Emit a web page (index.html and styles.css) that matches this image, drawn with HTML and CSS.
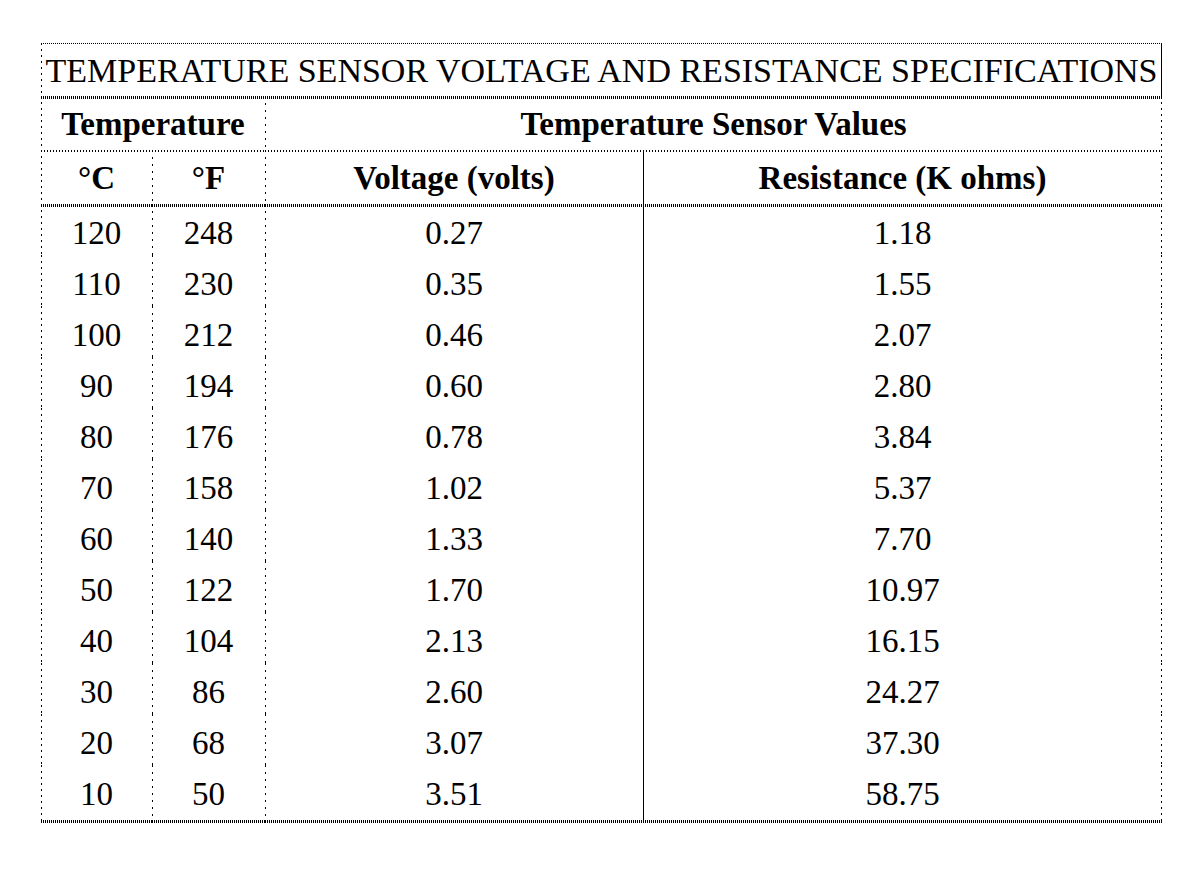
FILE: index.html
```html
<!DOCTYPE html>
<html lang="en">
<head>
<meta charset="utf-8">
<title>Temperature Sensor Voltage and Resistance Specifications</title>
<link rel="stylesheet" href="styles.css">
</head>
<body>
<table class="spec">
  <colgroup>
    <col class="c-c">
    <col class="c-f">
    <col class="c-v">
    <col class="c-r">
  </colgroup>
  <thead>
    <tr class="row-title">
      <th colspan="4" class="title l-outer r-solid t-fine">TEMPERATURE SENSOR VOLTAGE AND RESISTANCE SPECIFICATIONS</th>
    </tr>
    <tr class="row-head">
      <th colspan="2" class="l-outer t-dense">Temperature</th>
      <th colspan="2" class="l-dot r-outer t-dense">Temperature Sensor Values</th>
    </tr>
    <tr class="row-head">
      <th class="l-outer t-light">°C</th>
      <th class="l-dot t-light">°F</th>
      <th class="l-dot t-light">Voltage (volts)</th>
      <th class="l-solid r-outer t-light">Resistance (K ohms)</th>
    </tr>
  </thead>
  <tbody>
    <tr class="first"><td class="l-outer">120</td><td class="l-dot">248</td><td class="l-dot">0.27</td><td class="l-solid r-outer">1.18</td></tr>
    <tr><td class="l-outer">110</td><td class="l-dot">230</td><td class="l-dot">0.35</td><td class="l-solid r-outer">1.55</td></tr>
    <tr><td class="l-outer">100</td><td class="l-dot">212</td><td class="l-dot">0.46</td><td class="l-solid r-outer">2.07</td></tr>
    <tr><td class="l-outer">90</td><td class="l-dot">194</td><td class="l-dot">0.60</td><td class="l-solid r-outer">2.80</td></tr>
    <tr><td class="l-outer">80</td><td class="l-dot">176</td><td class="l-dot">0.78</td><td class="l-solid r-outer">3.84</td></tr>
    <tr><td class="l-outer">70</td><td class="l-dot">158</td><td class="l-dot">1.02</td><td class="l-solid r-outer">5.37</td></tr>
    <tr><td class="l-outer">60</td><td class="l-dot">140</td><td class="l-dot">1.33</td><td class="l-solid r-outer">7.70</td></tr>
    <tr><td class="l-outer">50</td><td class="l-dot">122</td><td class="l-dot">1.70</td><td class="l-solid r-outer">10.97</td></tr>
    <tr><td class="l-outer">40</td><td class="l-dot">104</td><td class="l-dot">2.13</td><td class="l-solid r-outer">16.15</td></tr>
    <tr><td class="l-outer">30</td><td class="l-dot">86</td><td class="l-dot">2.60</td><td class="l-solid r-outer">24.27</td></tr>
    <tr><td class="l-outer">20</td><td class="l-dot">68</td><td class="l-dot">3.07</td><td class="l-solid r-outer">37.30</td></tr>
    <tr class="last"><td class="l-outer">10</td><td class="l-dot">50</td><td class="l-dot">3.51</td><td class="l-solid r-outer">58.75</td></tr>
  </tbody>
</table>
</body>
</html>
```

FILE: styles.css
```css
html, body {
  margin: 0;
  padding: 0;
  background: #fff;
}

body {
  padding: 43px 0 0 41px;
}

.spec {
  --v-dash: repeating-linear-gradient(180deg, #000 0 2px, transparent 2px 6px);
  --v-dot: repeating-linear-gradient(180deg, #000 0 2px, transparent 2px 7px);
  --v-solid: linear-gradient(#000, #000);
  --h-dense: repeating-linear-gradient(90deg, #000 0 1px, transparent 1px 2px);
  --h-fine: repeating-linear-gradient(90deg, #000 0 1px, transparent 1px 2px);
  --h-light: repeating-linear-gradient(90deg, #000 0 1px, transparent 1px 3px);
  table-layout: fixed;
  width: 1121px;
  border-collapse: separate;
  border-spacing: 0;
  font-family: "Liberation Serif", "Times New Roman", serif;
  color: #000;
}

.c-c { width: 111px; }
.c-f { width: 113px; }
.c-v { width: 378px; }
.c-r { width: 519px; }

.spec th,
.spec td {
  padding: 0;
  text-align: center;
  vertical-align: middle;
  white-space: nowrap;
  font-size: 33px;
  line-height: 1;
  background-repeat: no-repeat;
  background-image: var(--l, none), var(--r, none), var(--t, none), var(--b, none);
  background-position: left top, right top, left top, left bottom;
  background-size: 1px 100%, 1px 100%, 100% var(--th, 3px), 100% 3px;
}

.spec th { font-weight: bold; }
.spec th.title {
  font-weight: normal;
  font-size: 34px;
  padding-top: 3px;
}

.row-title { height: 53px; }
.row-head { height: 54px; }
.spec tbody tr { height: 51px; }
.spec tbody tr.first td { --t: var(--h-dense); }
.spec tbody tr.last td { --b: var(--h-dense); height: 57px; }

.l-outer { --l: var(--v-dash); }
.l-dot { --l: var(--v-dot); }
.l-solid { --l: var(--v-solid); }
.r-outer { --r: var(--v-dash); }
.r-solid { --r: var(--v-solid); }

.t-fine { --t: var(--h-fine); --th: 1px; }
.t-dense { --t: var(--h-dense); }
.t-light { --t: var(--h-light); --th: 2px; }

.row-head th { padding-top: 3px; }
.spec tbody td { padding-top: 8px; }
.spec tbody tr.last td { padding-top: 1px; }
```
